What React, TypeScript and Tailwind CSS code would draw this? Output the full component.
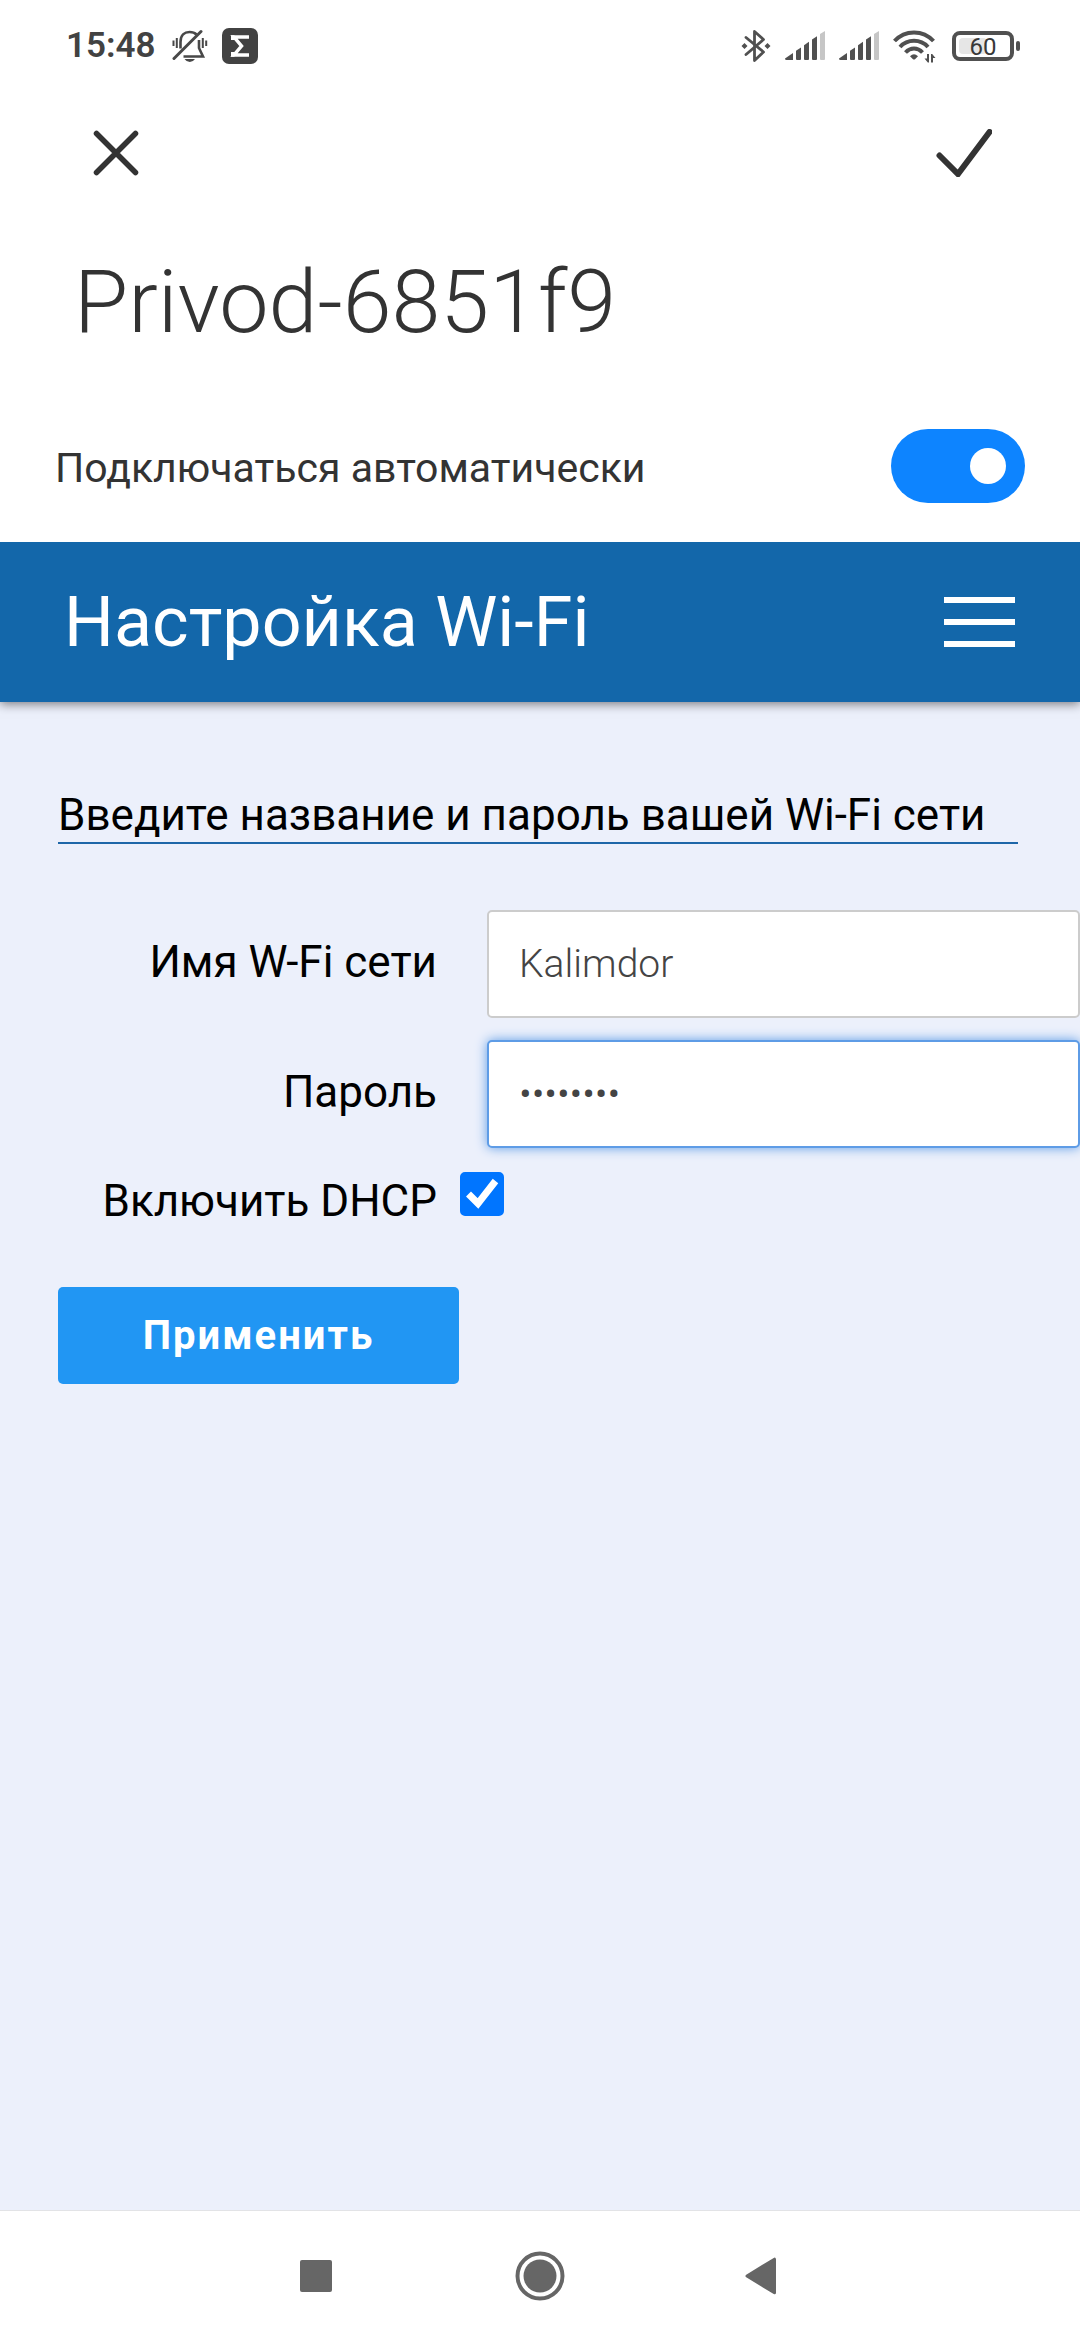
import { useState } from "react";

const SignalIcon = () => (
  <svg className="h-[30px] w-10" viewBox="0 0 40 30" fill="#505050">
    <path d="M0 27.5 L8 22 V29 H1.500 Q0 29 0 27.500Z" />
    <path d="M11 19.800 L16 16.500 V28 Q16 29 15 29 H12 Q11 29 11 28Z" />
    <path d="M19 14.200 L24 10.800 V28 Q24 29 23 29 H20 Q19 29 19 28Z" />
    <path d="M27 8.600 L32 5.200 V28 Q32 29 31 29 H28 Q27 29 27 28Z" />
    <path d="M35 3 L40 0 V28 Q40 29 39 29 H36 Q35 29 35 28Z" fill="#c6c6c6" />
  </svg>
)

const BluetoothIcon = () => (
  <svg className="h-[34px] w-[30px]" viewBox="0 0 30 34" fill="none" stroke="#505050" strokeWidth="2.8">
    <path d="M5 8.500 L22.500 23 L13.500 31.500 V2.500 L22.500 10.500 L5 25.500" strokeLinejoin="round" strokeLinecap="round" />
    <path d="M0.500 17 L3.500 14 L6.500 17 L3.500 20Z M23.500 17 L26.500 14 L29.500 17 L26.500 20Z" fill="#505050" stroke="none" />
  </svg>
)

const WifiIcon = () => (
  <svg className="h-[33px] w-[43px]" viewBox="0 0 43 33" fill="none" stroke="#505050" strokeWidth="4">
    <path d="M1.500 11 C12 -0.500 30 -0.500 40.500 11" />
    <path d="M7 17 C14.500 8.800 27.500 8.800 35 17" />
    <path d="M12.500 22.500 C17.500 17.200 24.500 17.200 29.500 22.500" />
    <path d="M17 26.200 Q21 22.500 25 26.200 L22 29.200 Q21 30 20 29.200Z" fill="#505050" stroke="none" />
    <path d="M34 24 H36 V32.500 H34.800 L31.500 28.500 H34Z M38 32.500 V24 H39.200 L42.500 28 H40 V32.500Z" fill="#505050" stroke="none" />
  </svg>
)

const BellOffIcon = () => (
  <svg className="h-[34px] w-9" viewBox="0 0 36 34" fill="none" stroke="#484848" strokeWidth="2.600">
    <path d="M8.500 19.500 V13 C8.500 6 12.500 3 17.500 3 C20.500 3 23 4 24.500 5.500 M27 11 V19 L31 27.500 H11.500" />
    <path d="M2 29.500 L29 2.500" strokeWidth="3" strokeLinecap="round" />
    <path d="M12.500 30 H23 Q21 33 17.800 33 Q14.500 33 12.500 30Z" fill="#484848" stroke="none" />
    <path d="M4.800 9 V19 M1.500 11.500 V17 M30.800 9 V19 M34.200 11.500 V17" strokeWidth="2" />
  </svg>
)

const SigmaIcon = () => (
  <svg className="size-9" viewBox="0 0 36 36">
    <rect width="36" height="36" rx="7" fill="#424242" />
    <path d="M27 9 H12 L19.500 18 L12 27 H27" fill="none" stroke="#fff" strokeWidth="3.500" />
    <path d="M9 7.200 H12.500 V12 H9Z M9 24 H12.500 V28.800 H9Z" fill="#fff" />
  </svg>
)

const StatusBar = () => (
  <div className="flex h-[92px] items-center justify-between pr-[60px] pl-[66px]">
    <div className="flex items-center">
      <span className="text-[35px] leading-10 font-semibold text-[#424242]">15:48</span>
      <div className="ml-4 flex items-center gap-[14px]">
        <BellOffIcon />
        <SigmaIcon />
      </div>
    </div>
    <div className="flex items-center gap-[14px]">
      <BluetoothIcon />
      <SignalIcon />
      <SignalIcon />
      <WifiIcon />
      <div className="ml-0.5 flex items-center gap-0.5">
        <div className="relative flex h-[30px] w-[62px] items-center justify-center rounded-lg border-4 border-[#505050]">
          <div className="absolute inset-y-[3px] left-[3px] w-7 rounded-sm bg-[#e6e6e6]" />
          <span className="relative pt-0.5 text-2xl leading-6 text-[#383838]">60</span>
        </div>
        <div className="h-[10px] w-1 rounded-sm bg-[#505050]" />
      </div>
    </div>
  </div>
)

const NavBar = () => (
  <nav className="flex h-[130px] items-center justify-center gap-32 border-t border-[#e2e3e6] bg-white">
    <button type="button" aria-label="Недавние" className="flex size-24 items-center justify-center">
      <svg className="size-8" viewBox="0 0 32 32" fill="#666">
        <rect width="32" height="32" rx="2" />
      </svg>
    </button>
    <button type="button" aria-label="Домой" className="flex size-24 items-center justify-center">
      <svg className="size-[50px]" viewBox="0 0 50 50" fill="#666">
        <circle cx="25" cy="25" r="22.500" fill="none" stroke="#666" strokeWidth="4" />
        <circle cx="25" cy="25" r="16.500" />
      </svg>
    </button>
    <button type="button" aria-label="Назад" className="flex size-24 items-center justify-center">
      <svg className="h-10 w-10" viewBox="0 0 40 40" fill="#666" stroke="#666" strokeWidth="3" strokeLinejoin="round">
        <path d="M3 20 L30.500 3.200 V36.800Z" />
      </svg>
    </button>
  </nav>
)

const inputClass =
  "h-[108px] min-w-0 flex-1 rounded-[5px] border-2 bg-white px-[30px] text-[39px] font-light text-[#444] outline-none"

export default function App() {
  const [autoConnect, setAutoConnect] = useState(true)
  const [name, setName] = useState("Kalimdor")
  const [password, setPassword] = useState("12345678")
  const [dhcp, setDhcp] = useState(true)

  return (
    <div className="flex min-h-screen flex-col overflow-x-hidden bg-[#ecf0fb] font-['Roboto',sans-serif]">
      <div className="relative z-10 bg-white pb-[39px] text-[#333]">
        <StatusBar />
        <div className="flex h-[122px] items-center justify-between px-20">
          <button type="button" aria-label="Закрыть" className="flex size-18 items-center justify-center">
            <svg className="size-12" viewBox="0 0 48 48" fill="none" stroke="#333" strokeWidth="5.500" strokeLinecap="round">
              <path d="M4.500 4.500 L43.500 43.500 M43.500 4.500 L4.500 43.500" />
            </svg>
          </button>
          <button type="button" aria-label="Сохранить" className="flex size-18 items-center justify-center">
            <svg className="h-12 w-14" viewBox="0 0 56 48" fill="none" stroke="#333" strokeWidth="6" strokeLinecap="round">
              <path d="M3.500 26.500 L22 45 L53.500 3" />
            </svg>
          </button>
        </div>
        <h1 className="mt-10 px-[74px] text-[88px] leading-[96px] font-light">Privod-6851f9</h1>
        <div className="mt-[79px] flex items-center justify-between px-[55px]">
          <label htmlFor="auto-connect" className="pt-1 text-[41px] leading-[48px]">
            Подключаться автоматически
          </label>
          <input
            id="auto-connect"
            type="checkbox"
            role="switch"
            checked={autoConnect}
            onChange={(event) => setAutoConnect(event.target.checked)}
            className="flex h-[74px] w-[134px] appearance-none items-center rounded-full bg-gray-300 px-[19px] before:size-9 before:rounded-full before:bg-white checked:justify-end checked:bg-[#0d84ff]"
          />
        </div>
      </div>

      <header className="flex h-40 items-center justify-between bg-[#1367aa] pr-[65px] pl-16 shadow-[0_2px_10px_rgba(0,0,0,0.5)]">
        <h2 className="text-[70px] leading-20 text-white">Настройка Wi-Fi</h2>
        <button type="button" aria-label="Меню" className="flex w-[71px] flex-col gap-4">
          <span className="h-1.5 w-full bg-white" />
          <span className="h-1.5 w-full bg-white" />
          <span className="h-1.5 w-full bg-white" />
        </button>
      </header>

      <main className="flex-1 pt-[86px] pl-[58px] text-[44px] leading-[54px] text-black">
        <p className="mr-[62px] border-b-2 border-[#1d66a8] whitespace-nowrap">
          Введите название и пароль вашей Wi-Fi сети
        </p>
        <form className="mt-[66px]" onSubmit={(event) => event.preventDefault()}>
          <div className="flex items-center gap-[50px]">
            <label htmlFor="wifi-name" className="w-[379px] pb-1 text-right">Имя W-Fi сети</label>
            <input
              id="wifi-name"
              type="text"
              value={name}
              onChange={(event) => setName(event.target.value)}
              className={`${inputClass} border-[#ccc]`}
            />
          </div>
          <div className="mt-[22px] flex items-center gap-[50px]">
            <label htmlFor="wifi-password" className="w-[379px] pb-1 text-right">Пароль</label>
            <input
              id="wifi-password"
              type="password"
              value={password}
              onChange={(event) => setPassword(event.target.value)}
              className={`${inputClass} border-[#5e9ce6] shadow-[0_0_12px_#5e9ce6]`}
            />
          </div>
          <div className="mt-6 flex items-start gap-[23px]">
            <label htmlFor="dhcp" className="w-[379px] pt-0.5 text-right">Включить DHCP</label>
            <div className="relative size-11">
              <input
                id="dhcp"
                type="checkbox"
                checked={dhcp}
                onChange={(event) => setDhcp(event.target.checked)}
                className="peer block size-11 appearance-none rounded-[5px] border-2 border-gray-500 bg-white checked:border-[#0075ff] checked:bg-[#0075ff]"
              />
              <svg
                className="pointer-events-none absolute inset-0 size-11 opacity-0 peer-checked:opacity-100"
                viewBox="0 0 44 44"
                fill="none"
                stroke="#fff"
                strokeWidth="7"
              >
                <path d="M8.500 22 L18 31.500 L35.500 9" />
              </svg>
            </div>
          </div>
          <button
            type="submit"
            className="mt-[59px] h-[97px] w-[401px] rounded-[5px] bg-[#2196f3] text-[40px] leading-[48px] font-bold tracking-wider text-white"
          >
            Применить
          </button>
        </form>
      </main>

      <NavBar />
    </div>
  )
}
